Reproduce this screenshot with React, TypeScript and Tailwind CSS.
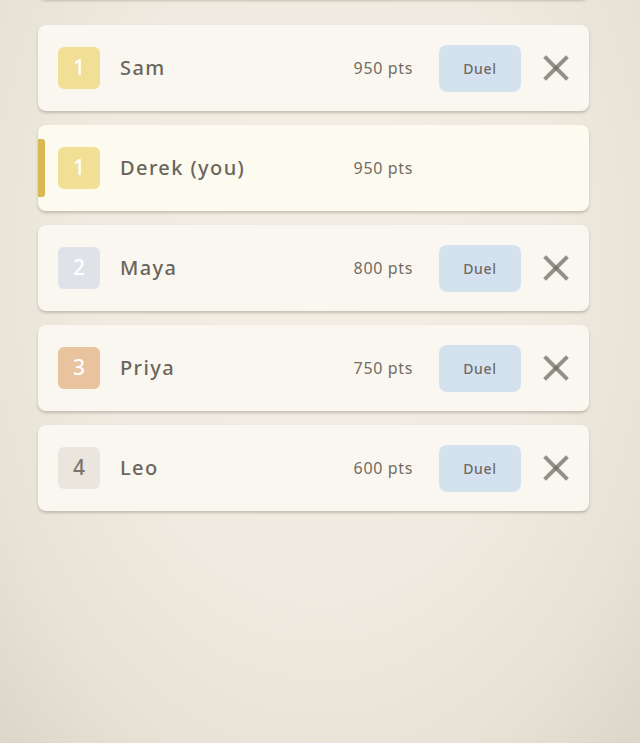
import React from 'react'

type Player = {
  rank: number
  name: string
  points: number
  you?: boolean
}

const players: Player[] = [
  { rank: 1, name: 'Sam', points: 950 },
  { rank: 1, name: 'Derek (you)', points: 950, you: true },
  { rank: 2, name: 'Maya', points: 800 },
  { rank: 3, name: 'Priya', points: 750 },
  { rank: 4, name: 'Leo', points: 600 },
]

const badgeClass: Record<number, string> = {
  1: 'bg-[#f1df95] text-white',
  2: 'bg-[#dfe3e7] text-white',
  3: 'bg-[#e8c39e] text-white',
  4: 'bg-[#ebe6dd] text-[#7a746a]',
}

function CloseIcon() {
  return (
    <svg width="26" height="26" viewBox="0 0 26 26" className="block">
      <g stroke="#6d685e" strokeWidth="4" strokeOpacity="0.72" strokeLinecap="square">
        <line x1="3" y1="3" x2="23" y2="23" />
        <line x1="23" y1="3" x2="3" y2="23" />
      </g>
    </svg>
  )
}

function Row({ player }: { player: Player }) {
  return (
    <div
      className={`relative flex h-[86px] items-center rounded-lg pl-5 pr-5 shadow-[0_2px_3px_rgba(90,80,60,0.28)] ${
        player.you ? 'bg-[#fdfbf0]' : 'bg-[#f9f7f0]'
      }`}
    >
      {player.you && (
        <div className="absolute left-0 top-[14px] h-[58px] w-[7px] rounded-r-[3px] bg-[#d8b955]" />
      )}
      <div
        className={`flex h-[42px] w-[42px] shrink-0 items-center justify-center rounded-md text-[21px] font-medium ${
          badgeClass[player.rank]
        }`}
      >
        {player.rank}
      </div>
      <div className="ml-5 flex-1 text-[20px] font-medium tracking-[0.07em] text-[#6a655c]">
        {player.name}
      </div>
      <div className="w-[120px] text-right text-[16px] tracking-[0.04em] text-[#726d65]">
        {player.points} pts
      </div>
      {player.you ? (
        <div className="w-[156px]" />
      ) : (
        <>
          <button className="ml-[26px] h-[47px] w-[82px] rounded-lg bg-[#d4e2f0] text-[14px] font-medium tracking-[0.05em] text-[#6f6a62]">
            Duel
          </button>
          <div className="ml-[22px] flex h-[26px] w-[26px] items-center justify-center">
            <CloseIcon />
          </div>
        </>
      )}
    </div>
  )
}

export default function App() {
  return (
    <div
      className="min-h-[743px] w-full overflow-hidden bg-[radial-gradient(ellipse_70%_90%_at_50%_35%,#f2eee3_0%,#efebe0_50%,#e7e2d6_80%,#dcd7cb_100%)]"
      style={{ fontFamily: '"Noto Sans", "Open Sans", sans-serif' }}
    >
      <div className="pl-[38px] pr-[51px]">
        <div className="-mt-[87px] mb-[26px] h-[86px] rounded-lg bg-[#f9f7f0] shadow-[0_2px_3px_rgba(90,80,60,0.28)]" />
        <div className="flex flex-col gap-[14px]">
          {players.map((p, i) => (
            <Row key={i} player={p} />
          ))}
        </div>
      </div>
    </div>
  )
}
